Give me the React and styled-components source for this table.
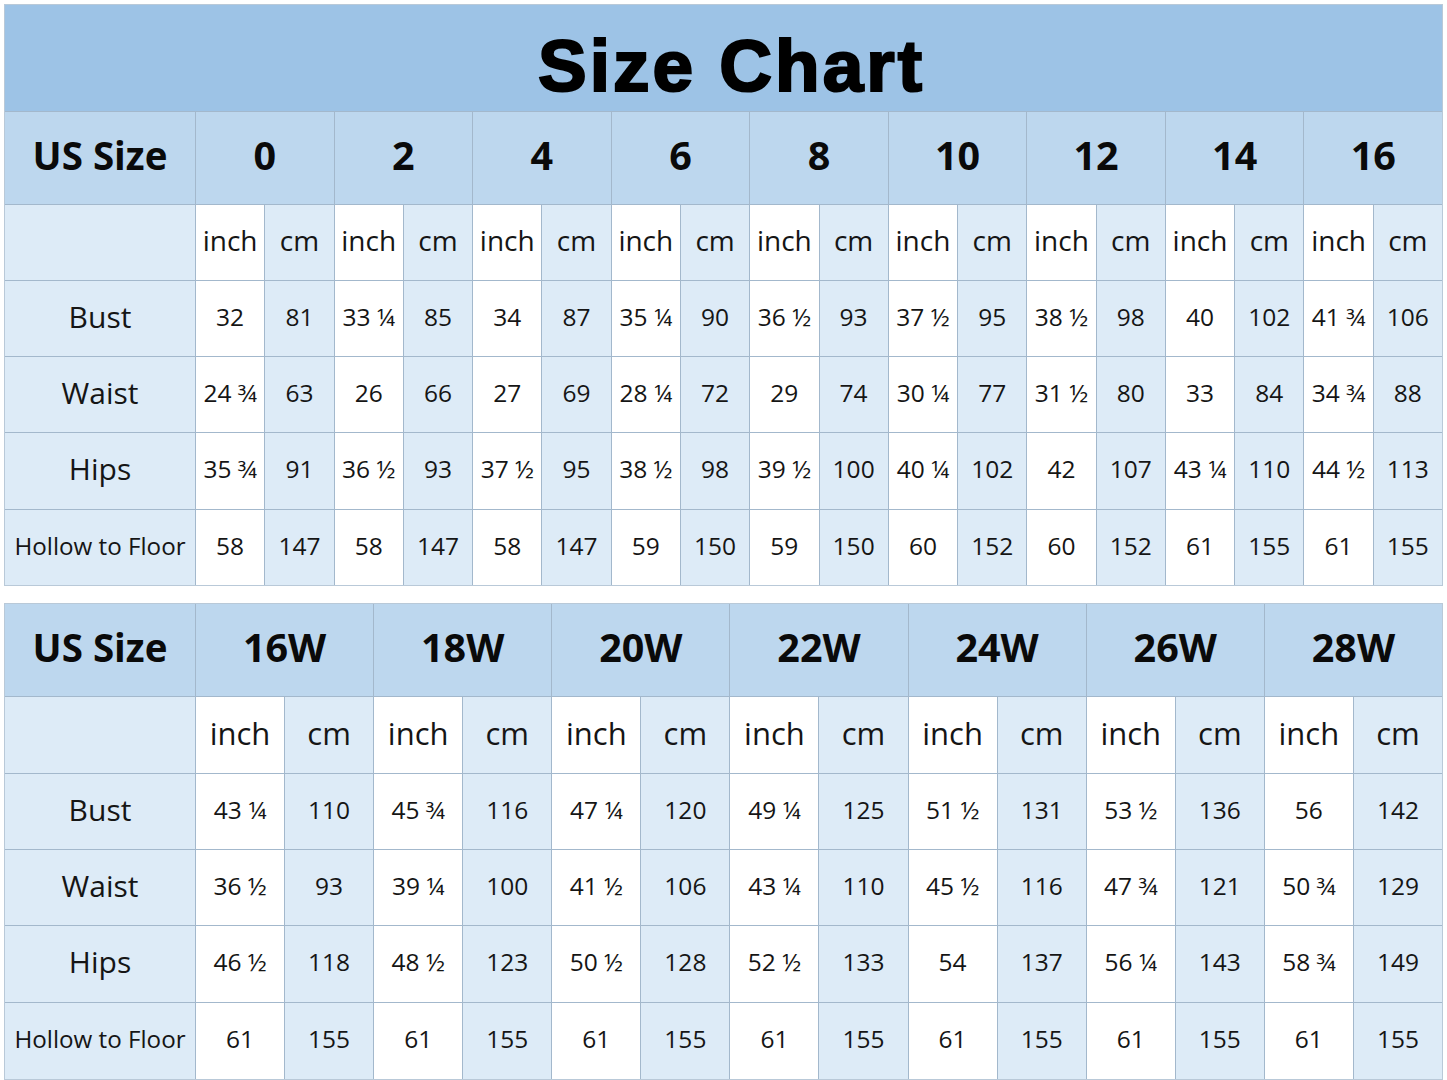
import React from "react";
import styled, { createGlobalStyle } from "styled-components";

// top chart: regular sizes, bottom chart: plus sizes
const regular = {
  sizes: ["0", "2", "4", "6", "8", "10", "12", "14", "16"],
  rows: [
    ["Bust", ["32", "81", "33 ¼", "85", "34", "87", "35 ¼", "90", "36 ½", "93", "37 ½", "95", "38 ½", "98", "40", "102", "41 ¾", "106"]],
    ["Waist", ["24 ¾", "63", "26", "66", "27", "69", "28 ¼", "72", "29", "74", "30 ¼", "77", "31 ½", "80", "33", "84", "34 ¾", "88"]],
    ["Hips", ["35 ¾", "91", "36 ½", "93", "37 ½", "95", "38 ½", "98", "39 ½", "100", "40 ¼", "102", "42", "107", "43 ¼", "110", "44 ½", "113"]],
    ["Hollow to Floor", ["58", "147", "58", "147", "58", "147", "59", "150", "59", "150", "60", "152", "60", "152", "61", "155", "61", "155"]],
  ],
};

const plus = {
  sizes: ["16W", "18W", "20W", "22W", "24W", "26W", "28W"],
  rows: [
    ["Bust", ["43 ¼", "110", "45 ¾", "116", "47 ¼", "120", "49 ¼", "125", "51 ½", "131", "53 ½", "136", "56", "142"]],
    ["Waist", ["36 ½", "93", "39 ¼", "100", "41 ½", "106", "43 ¼", "110", "45 ½", "116", "47 ¾", "121", "50 ¾", "129"]],
    ["Hips", ["46 ½", "118", "48 ½", "123", "50 ½", "128", "52 ½", "133", "54", "137", "56 ¼", "143", "58 ¾", "149"]],
    ["Hollow to Floor", ["61", "155", "61", "155", "61", "155", "61", "155", "61", "155", "61", "155", "61", "155"]],
  ],
};

const GlobalStyle = createGlobalStyle`
  body {
    margin: 0;
    background: #ffffff;
    font-family: "Open Sans", "Noto Sans", sans-serif;
    color: #151515;
  }
`;

const Page = styled.div`
  width: 1439px;
  padding: 4px;
  display: flex;
  flex-direction: column;
  gap: 17px;
`;

const Grid = styled.div`
  display: grid;
  grid-template-columns: 190px repeat(${(p) => p.cols}, 1fr);
  grid-template-rows: ${(p) => p.rows};
  gap: 1px;
  background: #a3b8cc;
  border: 1px solid #b9c9d8;
`;

const Title = styled.div`
  grid-column: 1 / -1;
  background: #9dc3e6;
  display: flex;
  align-items: center;
  justify-content: center;
  font-family: "Liberation Sans", Arial, sans-serif;
  font-weight: 900;
  font-size: 73px;
  letter-spacing: 3px;
  -webkit-text-stroke: 2.2px #000;
  color: #000;
  padding-top: 14px;
  padding-left: 16px;
`;

const Cell = styled.div`
  display: flex;
  align-items: center;
  justify-content: center;
  white-space: nowrap;
  padding-bottom: ${(p) => (p.$bold ? 6 : 5)}px;
  background: ${(p) => p.$bg || "#ffffff"};
  grid-column: ${(p) => (p.$span ? `span ${p.$span}` : "auto")};
  font-size: ${(p) => p.$size || 24.5}px;
  font-weight: ${(p) => (p.$bold ? 700 : 400)};
  color: ${(p) => (p.$bold ? "#0a0a0a" : "#151515")};
`;

const HEAD = "#bdd7ee";
const LIGHT = "#ddebf7";

const Chart = ({ data, title, unitSize, rows }) => (
  <Grid cols={data.sizes.length * 2} rows={rows}>
    {title && <Title>{title}</Title>}
    <Cell $bg={HEAD} $bold $size={38.5}>US Size</Cell>
    {data.sizes.map((s) => (
      <Cell key={s} $bg={HEAD} $bold $span={2} $size={39.5}>{s}</Cell>
    ))}
    <Cell $bg={LIGHT} />
    {data.sizes.map((s) => (
      <React.Fragment key={s}>
        <Cell $size={unitSize}>inch</Cell>
        <Cell $bg={LIGHT} $size={unitSize}>cm</Cell>
      </React.Fragment>
    ))}
    {data.rows.map(([label, values]) => (
      <React.Fragment key={label}>
        <Cell $bg={LIGHT} $size={label.length > 6 ? 24.2 : 30}>{label}</Cell>
        {values.map((v, i) => (
          <Cell key={i} $bg={i % 2 ? LIGHT : "#ffffff"}>{v}</Cell>
        ))}
      </React.Fragment>
    ))}
  </Grid>
);

export default function App() {
  return (
    <>
      <GlobalStyle />
      <Page>
        <Chart
          data={regular}
          title="Size Chart"
          unitSize={28}
          rows="106px 92px 75px 75px 75px 76px 75px"
        />
        <Chart
          data={plus}
          unitSize={31}
          rows="92px 76px 75px 75px 76px 76px"
        />
      </Page>
    </>
  );
}
